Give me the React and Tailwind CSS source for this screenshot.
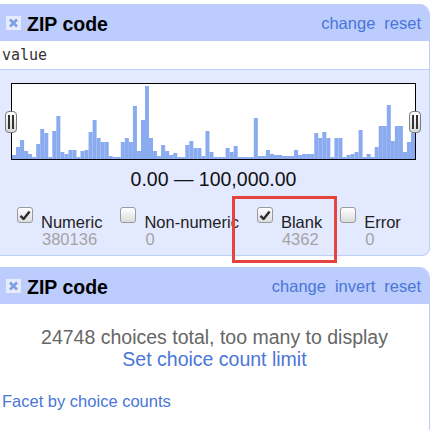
import React from "react";

const BARS = [4,12,19,8,5,2,15,30,26,2,28,43,7,5,9,9,2,8,9,27,39,21,17,17,3,2,2,17,21,17,53,8,39,73,21,8,3,14,8,4,6,2,2,14,18,11,11,3,28,7,2,2,2,11,7,13,2,2,2,2,41,3,3,9,5,4,4,3,3,3,9,4,5,5,5,26,21,27,21,2,21,21,2,4,5,7,29,2,5,2,12,33,33,54,18,33,33,7,17,26];

function CloseIcon() {
  return (
    <svg width="15" height="14" viewBox="0 0 15 14" className="shrink-0">
      <rect x="0" y="0" width="15" height="14" fill="#e6ecfd" />
      <path d="M4 3.5 L11 10.5 M11 3.5 L4 10.5" stroke="#7d9fe4" strokeWidth="2.6" strokeLinecap="butt" />
    </svg>
  );
}

function Checkbox({ checked }) {
  return (
    <span className="w-[16px] h-[16px] shrink-0 rounded-[3px] border border-[#9a9a9a] bg-gradient-to-b from-[#ffffff] to-[#dcdcdc] flex items-center justify-center">
      {checked && (
        <svg width="12" height="11" viewBox="0 0 12 11">
          <path d="M1.5 5.8 L4.6 9 L10.6 1.6" fill="none" stroke="#2b2b2b" strokeWidth="2.4" strokeLinejoin="round" />
        </svg>
      )}
    </span>
  );
}

function Handle({ className }) {
  return (
    <div className={"absolute top-[28px] w-[12px] h-[22px] rounded-[4px] border border-[#7a7a7a] bg-gradient-to-b from-[#ffffff] to-[#d8d8d8] flex items-center justify-center gap-[2px] " + className}>
      <span className="w-[2px] h-[14px] bg-[#333]" />
      <span className="w-[2px] h-[14px] bg-[#333]" />
    </div>
  );
}

function Header({ actions }) {
  return (
    <div className="h-[37px] bg-[#bbccfd] flex items-center pl-[6px] pr-[8px] rounded-tr-[10px]">
      <CloseIcon />
      <span className="ml-[6px] pt-[3px] text-[19.5px] leading-[22px] font-bold text-black">ZIP code</span>
      <div className="ml-auto pt-[1px] flex gap-[9px] text-[16.5px] leading-[19px] text-[#4a76d8]">
        {actions.map((a) => (
          <span key={a}>{a}</span>
        ))}
      </div>
    </div>
  );
}

function Item({ label, count, checked }) {
  return (
    <div className="flex items-start gap-[8px]">
      <Checkbox checked={checked} />
      <div className="pt-[7px] flex flex-col">
        <span className="text-[16.5px] leading-[17px] text-[#222]">{label}</span>
        <span className="text-[16.5px] leading-[17px] text-[#a3a3a3] pl-[1px]">{count}</span>
      </div>
    </div>
  );
}

export default function App() {
  return (
    <div className="relative w-[434px] h-[430px] bg-white overflow-hidden font-['Liberation_Sans',Arial,sans-serif]">
      {/* Panel 1 */}
      <div className="mt-[4px] w-[430px] border-r border-b border-[#bccdfb] rounded-tr-[10px] rounded-br-[8px] bg-[#e3e9ff]">
        <Header actions={["change", "reset"]} />
        <div className="h-[29px] bg-white border-b border-[#bccdfb] flex items-center pl-[2px] font-['DejaVu_Sans_Mono',monospace] text-[15px] text-[#333]">
          value
        </div>
        <div className="pt-[13px] pb-[7px] rounded-br-[8px]">
          <div className="relative ml-[11px] w-[405px]">
            <div className="w-[405px] h-[77px] border border-black bg-white">
              <svg width="403" height="75" viewBox="0 0 400 75" preserveAspectRatio="none" className="block">
                {BARS.map((h, i) => (
                  <rect key={i} x={i * 4} y={75 - h} width="4" height={h} fill="#8aabef" />
                ))}
              </svg>
            </div>
            <Handle className="left-[-6px]" />
            <Handle className="left-[398px]" />
          </div>
          <div className="mt-[8px] text-center text-[19.5px] leading-[22px] text-[#111] pr-[2px]">
            0.00 — 100,000.00
          </div>
          <div className="mt-[17px] ml-[17px] flex gap-[18px]">
            <Item label="Numeric" count="380136" checked />
            <Item label="Non-numeric" count="0" />
            <Item label="Blank" count="4362" checked />
            <Item label="Error" count="0" />
          </div>
        </div>
      </div>

      {/* Panel 2 */}
      <div className="mt-[11px] w-[430px] h-[200px] border-r border-[#bccdfb] rounded-tr-[10px]">
        <Header actions={["change", "invert", "reset"]} />
        <div className="pt-[22px] text-center text-[19.5px] leading-[22px]">
          <div className="text-[#666]">24748 choices total, too many to display</div>
          <div className="text-[#4a76d8]">Set choice count limit</div>
        </div>
        <div className="mt-[22px] pl-[2px] text-[16.5px] leading-[19px] text-[#4a76d8]">
          Facet by choice counts
        </div>
      </div>

      {/* annotation */}
      <div className="absolute left-[232px] top-[196px] w-[105px] h-[67px] border-[3px] border-[#e5433d]" />
    </div>
  );
}
